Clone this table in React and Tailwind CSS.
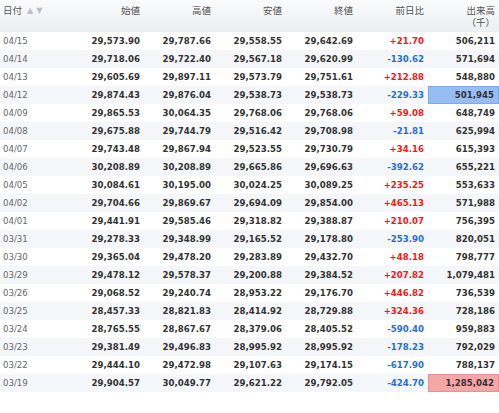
import React from 'react';

const rows = [
  ['04/15', '29,573.90', '29,787.66', '29,558.55', '29,642.69', '+21.70', '506,211'],
  ['04/14', '29,718.06', '29,722.40', '29,567.18', '29,620.99', '-130.62', '571,694'],
  ['04/13', '29,605.69', '29,897.11', '29,573.79', '29,751.61', '+212.88', '548,880'],
  ['04/12', '29,874.43', '29,876.04', '29,538.73', '29,538.73', '-229.33', '501,945', 'low'],
  ['04/09', '29,865.53', '30,064.35', '29,768.06', '29,768.06', '+59.08', '648,749'],
  ['04/08', '29,675.88', '29,744.79', '29,516.42', '29,708.98', '-21.81', '625,994'],
  ['04/07', '29,743.48', '29,867.94', '29,523.55', '29,730.79', '+34.16', '615,393'],
  ['04/06', '30,208.89', '30,208.89', '29,665.86', '29,696.63', '-392.62', '655,221'],
  ['04/05', '30,084.61', '30,195.00', '30,024.25', '30,089.25', '+235.25', '553,633'],
  ['04/02', '29,704.66', '29,869.67', '29,694.09', '29,854.00', '+465.13', '571,988'],
  ['04/01', '29,441.91', '29,585.46', '29,318.82', '29,388.87', '+210.07', '756,395'],
  ['03/31', '29,278.33', '29,348.99', '29,165.52', '29,178.80', '-253.90', '820,051'],
  ['03/30', '29,365.04', '29,478.20', '29,283.89', '29,432.70', '+48.18', '798,777'],
  ['03/29', '29,478.12', '29,578.37', '29,200.88', '29,384.52', '+207.82', '1,079,481'],
  ['03/26', '29,068.52', '29,240.74', '28,953.22', '29,176.70', '+446.82', '736,539'],
  ['03/25', '28,457.33', '28,821.83', '28,414.92', '28,729.88', '+324.36', '728,186'],
  ['03/24', '28,765.55', '28,867.67', '28,379.06', '28,405.52', '-590.40', '959,883'],
  ['03/23', '29,381.49', '29,496.83', '28,995.92', '28,995.92', '-178.23', '792,029'],
  ['03/22', '29,444.10', '29,472.98', '29,107.63', '29,174.15', '-617.90', '788,137'],
  ['03/19', '29,904.57', '30,049.77', '29,621.22', '29,792.05', '-424.70', '1,285,042', 'high'],
];

const heads = ['始値', '高値', '安値', '終値', '前日比'];

function App() {
  return (
    <div className="w-[499px] h-[413px] overflow-hidden bg-white font-['DejaVu_Sans','Noto_Sans_CJK_JP',sans-serif]">
      {/* header */}
      <div className="flex h-[32px] bg-gradient-to-b from-[#fafbfc] to-[#eceef2] text-[#555] text-[9.5px] leading-[12px]">
        <div className="w-[73px] pl-[3px] pt-[5px] flex items-start gap-[5px]">
          <span>日付</span>
          <span className="text-[8px] text-[#b9bfc9] tracking-[3px]">▲▼</span>
        </div>
        {heads.map((h) => (
          <div key={h} className="w-[71px] pr-[4px] pt-[5px] text-right">{h}</div>
        ))}
        <div className="w-[71px] pr-[4px] pt-[5px] text-right">
          <div>出来高</div>
          <div>（千）</div>
        </div>
      </div>

      {/* rows */}
      {rows.map((r, i) => (
        <div
          key={r[0]}
          className={`flex h-[18px] items-center text-[8.6px] ${i % 2 ? 'bg-[#f5f6f9]' : 'bg-white'}`}
        >
          <div className="w-[73px] pl-[3px] text-[#666]">{r[0]}</div>
          {r.slice(1, 5).map((v, j) => (
            <div key={j} className="w-[71px] pr-[4px] text-right font-bold text-[#333]">{v}</div>
          ))}
          <div
            className={`w-[71px] pr-[4px] text-right font-bold ${
              r[5].startsWith('+') ? 'text-[#f21818]' : 'text-[#1f6fd6]'
            }`}
          >
            {r[5]}
          </div>
          <div
            className={`w-[71px] h-full flex items-center justify-end pr-[4px] font-bold text-[#333] ${
              r[7] === 'low'
                ? 'bg-[#97bdf5] border border-[#7fa8e4]'
                : r[7] === 'high'
                ? 'bg-[#f5a7a7] border border-[#e89090]'
                : ''
            }`}
          >
            {r[6]}
          </div>
        </div>
      ))}
    </div>
  );
}

export default App;
